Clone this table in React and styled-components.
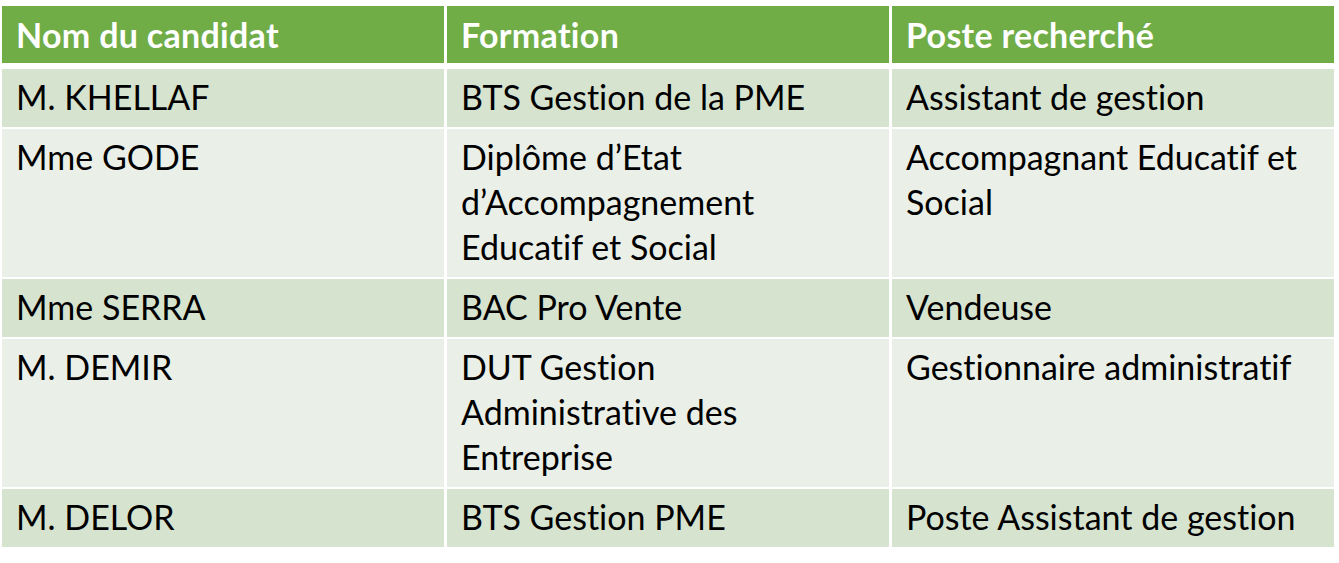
import styled, { createGlobalStyle } from "styled-components";

const GlobalStyle = createGlobalStyle`
  body {
    margin: 0;
    background: #ffffff;
    font-family: Lato, "Liberation Sans", sans-serif;
  }
`;

const Page = styled.div`
  padding: 6px 0 0 2px;
`;

const Table = styled.div`
  width: 1332px;
  display: flex;
  flex-direction: column;
  gap: 2px;
`;

const Row = styled.div`
  display: grid;
  grid-template-columns: 442px 442px 442px;
  column-gap: 3px;
  margin-bottom: ${(p) => (p.$head ? "4px" : "0")};
`;

const Cell = styled.div`
  background: ${(p) => (p.$head ? "#70ad47" : p.$band ? "#d6e3cf" : "#eaefe7")};
  color: ${(p) => (p.$head ? "#ffffff" : "#000000")};
  font-weight: ${(p) => (p.$head ? 700 : 400)};
  font-size: 34px;
  line-height: 45px;
  font-variant-ligatures: none;
  letter-spacing: ${(p) => (p.$head ? "0.3px" : "0")};
  padding: ${(p) => (p.$head ? "6px 15px 6px 14px" : "5px 15px 8px 14px")};
  min-height: 45px;
`;

const header = ["Nom du candidat", "Formation", "Poste recherché"];

const rows = [
  ["M. KHELLAF", "BTS Gestion de la PME", "Assistant de gestion"],
  ["Mme GODE", "Diplôme d’Etat\nd’Accompagnement\nEducatif et Social", "Accompagnant Educatif et\nSocial"],
  ["Mme SERRA", "BAC Pro Vente", "Vendeuse"],
  ["M. DEMIR", "DUT Gestion\nAdministrative des\nEntreprise", "Gestionnaire administratif"],
  ["M. DELOR", "BTS Gestion PME", "Poste Assistant de gestion"],
];

function Lines({ text }) {
  return text.split("\n").map((line, i) => <div key={i}>{line}</div>);
}

export default function App() {
  return (
    <Page>
      <GlobalStyle />
      <Table>
        <Row $head>
          {header.map((h) => (
            <Cell key={h} $head>{h}</Cell>
          ))}
        </Row>
        {rows.map((row, index) => (
          <Row key={index}>
            {row.map((txt, j) => (
              <Cell key={j} $band={index % 2 === 0}>
                <Lines text={txt} />
              </Cell>
            ))}
          </Row>
        ))}
      </Table>
    </Page>
  );
}
